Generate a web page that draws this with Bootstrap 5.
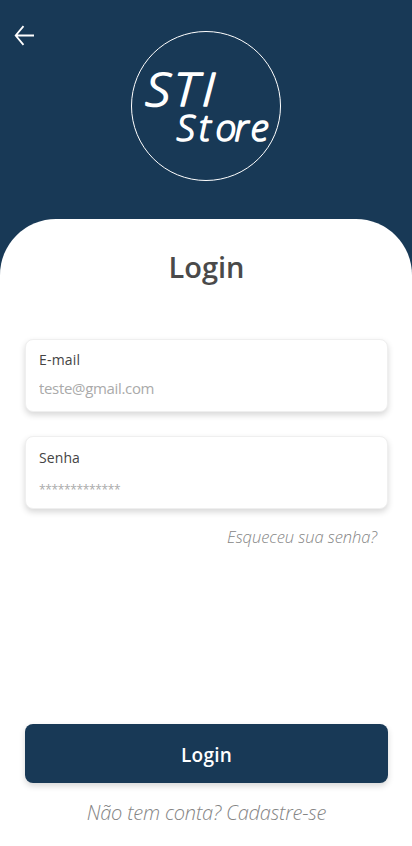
<!DOCTYPE html>
<html lang="pt-BR">
<head>
<meta charset="utf-8">
<meta name="viewport" content="width=device-width, initial-scale=1">
<title>STI Store - Login</title>
<link href="https://cdn.jsdelivr.net/npm/bootstrap@5.3.0/dist/css/bootstrap.min.css" rel="stylesheet">
<style>
  body { font-family: "Open Sans", "Noto Sans", sans-serif; background: #183956; height: 846px; overflow: hidden; }
  .screen { height: 846px; }
  .brand-head { height: 219px; padding: 25px 14px 0; }
  .back-link { width: 21px; height: 21px; }
  .brand-logo { width: 150px; height: 150px; margin: 6px auto 0 96px; }
  .sheet { border-radius: 56px 56px 0 0; padding: 0 24px 0 25px; }
  .sheet-title { font-size: 29px; line-height: 40px; margin: 28px 0 52px; color: #4a4a4a; }
  .field-box { height: 73px; border: 1px solid #efefef; border-radius: 8px; padding: 0 13px; box-shadow: 0 3px 6px rgba(0,0,0,.16); }
  .field-box + .field-box { margin-top: 24px; }
  .field-box label { font-size: 14px; line-height: 20px; margin-top: 10px; color: #444; letter-spacing: .2px; }
  .field-box input { font-size: 15px; line-height: 20px; height: 20px; margin-top: 8px; outline: 0; letter-spacing: -.33px; }
  .field-box input::placeholder { color: #aaa; opacity: 1; }
  .field-box .secret-label { margin-top: 11px; letter-spacing: .1px; }
  .field-box .secret-input { font-size: 12px; margin-top: 12px; letter-spacing: -.35px; }
  .hint { color: #858585; font-weight: 300; font-style: italic; }
  .forgot { font-size: 16.5px; line-height: 22px; margin: 17px 11px 0 0; letter-spacing: -.07px; }
  .enter-btn { height: 59px; border-radius: 8px; background: #183956; font-size: 19px; letter-spacing: .2px; padding: 4px 0 0; box-shadow: 0 3px 6px rgba(0,0,0,.16); }
  .signup { font-size: 20px; line-height: 26px; margin: 17px 0 20px; letter-spacing: -.2px; }
</style>
<script src="https://cdn.jsdelivr.net/npm/bootstrap@5.3.0/dist/js/bootstrap.bundle.min.js"></script>
</head>
<body>
<main class="screen d-flex flex-column">
  <header class="brand-head d-flex align-items-start">
    <a href="#" class="back-link d-block" aria-label="Voltar">
      <svg class="d-block" width="21" height="21" viewBox="0 0 21 21" fill="none" stroke="#fff" stroke-width="1.8"><path d="M9.5 1.2 1.7 10.5l7.8 9.3M1.7 10.5H20"/></svg>
    </a>
    <svg class="brand-logo" viewBox="0 0 150 150" fill="none">
      <circle cx="75" cy="75" r="74.5" stroke="#fff"/>
      <g fill="#fff" stroke="#fff" stroke-width="1.6" stroke-linejoin="round" font-family="Open Sans, sans-serif" font-style="italic" font-weight="300">
        <text transform="translate(14 75) skewX(-2) scale(1.08 1)" x="0 26 52.5" y="0" font-size="46">STI</text>
        <text transform="translate(45.5 109.5)" x="0 22.5 39 58 74" y="0" font-size="37">Store</text>
      </g>
    </svg>
  </header>
  <section class="sheet bg-white flex-grow-1 d-flex flex-column">
    <h1 class="sheet-title text-center fw-semibold">Login</h1>
    <form class="d-flex flex-column flex-grow-1">
      <div class="field-box bg-white d-flex flex-column">
        <label for="email">E-mail</label>
        <input id="email" type="email" class="border-0 p-0 w-100 bg-transparent" placeholder="teste@gmail.com">
      </div>
      <div class="field-box bg-white d-flex flex-column">
        <label for="senha" class="secret-label">Senha</label>
        <input id="senha" type="password" class="secret-input border-0 p-0 w-100 bg-transparent" placeholder="*************">
      </div>
      <a href="#" class="hint forgot align-self-end text-decoration-none">Esqueceu sua senha?</a>
      <button type="button" class="enter-btn btn text-white fw-semibold w-100 border-0 mt-auto">Login</button>
      <a href="#" class="hint signup text-center text-decoration-none">Não tem conta? Cadastre-se</a>
    </form>
  </section>
</main>
</body>
</html>
